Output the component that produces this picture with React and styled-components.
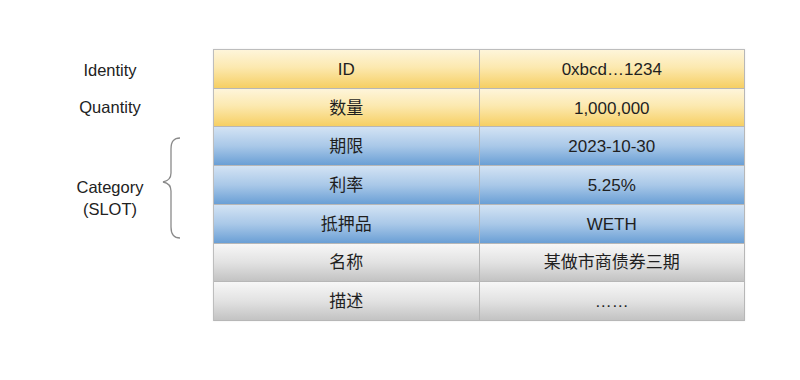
import React from "react";
import styled, { createGlobalStyle } from "styled-components";

const Global = createGlobalStyle`
  html, body {
    margin: 0;
    background: #ffffff;
  }
  body {
    font-family: "Liberation Sans", Arial, "Noto Sans CJK SC", sans-serif;
    color: #222;
  }
`;

const fills = {
  yellow: "linear-gradient(to bottom, #fef5da 0%, #fce9b0 45%, #f6cf63 100%)",
  blue: "linear-gradient(to bottom, #d3e3f4 0%, #a9c8e8 50%, #6a9fd5 100%)",
  gray: "linear-gradient(to bottom, #f7f7f7 0%, #e2e2e2 50%, #c3c3c3 100%)",
};

const Page = styled.div`
  width: 800px;
  height: 380px;
  padding: 49px 0 0 60px;
  box-sizing: border-box;
`;

const Layout = styled.div`
  display: grid;
  grid-template-columns: 100px 53px 532px;
  grid-template-rows: repeat(7, 38.86px);
`;

const Label = styled.div`
  grid-column: 1;
  grid-row: ${(p) => p.$row};
  display: flex;
  align-items: center;
  justify-content: center;
  text-align: center;
  font-size: 16.5px;
  line-height: 22px;
  padding-top: ${(p) => p.$shift || 0}px;
`;

const BraceCell = styled.div`
  grid-column: 2;
  grid-row: 3 / span 3;
  display: flex;
  align-items: flex-start;
  padding-top: 10px;
`;

const Table = styled.div`
  grid-column: 3;
  grid-row: 1 / span 7;
  display: grid;
  grid-template-columns: 1fr 1fr;
  grid-template-rows: repeat(7, 1fr);
  border-top: 1px solid #bdbdbd;
  border-left: 1px solid #bdbdbd;
  box-shadow: 0 0 2px rgba(0, 0, 0, 0.08);
`;

const Cell = styled.div`
  display: flex;
  align-items: center;
  justify-content: center;
  padding-top: 2px;
  background: ${(p) => fills[p.$tone]};
  border-right: 1px solid #b7b7b7;
  border-bottom: 1px solid #b7b7b7;
  font-size: 17px;
  line-height: 22px;
  color: #1f1f1f;
  white-space: nowrap;
`;

const rows = [
  ["ID", "0xbcd…1234", "yellow"],
  ["数量", "1,000,000", "yellow"],
  ["期限", "2023-10-30", "blue"],
  ["利率", "5.25%", "blue"],
  ["抵押品", "WETH", "blue"],
  ["名称", "某做市商债券三期", "gray"],
  ["描述", "……", "gray"],
];

function Brace() {
  return (
    <svg width="24" height="102" viewBox="0 0 24 102">
      <path
        d="M20 1 C14 1 11 4 11 12 L11 36 C11 42 8 44 3 45 C8 46 11 48 11 54 L11 90 C11 98 14 101 20 101"
        fill="none"
        stroke="#8a8a8a"
        strokeWidth="1.3"
      />
    </svg>
  );
}

export default function App() {
  return (
    <>
      <Global />
      <Page>
        <Layout>
          <Label $row={1} $shift={3}>Identity</Label>
          <Label $row={2}>Quantity</Label>
          <Label $row="3 / span 3" $shift={25}>
            Category
            <br />
            (SLOT)
          </Label>
          <BraceCell>
            <Brace />
          </BraceCell>
          <Table>
            {rows.map(([key, value, tone]) => (
              <React.Fragment key={key}>
                <Cell $tone={tone}>{key}</Cell>
                <Cell $tone={tone}>{value}</Cell>
              </React.Fragment>
            ))}
          </Table>
        </Layout>
      </Page>
    </>
  );
}
